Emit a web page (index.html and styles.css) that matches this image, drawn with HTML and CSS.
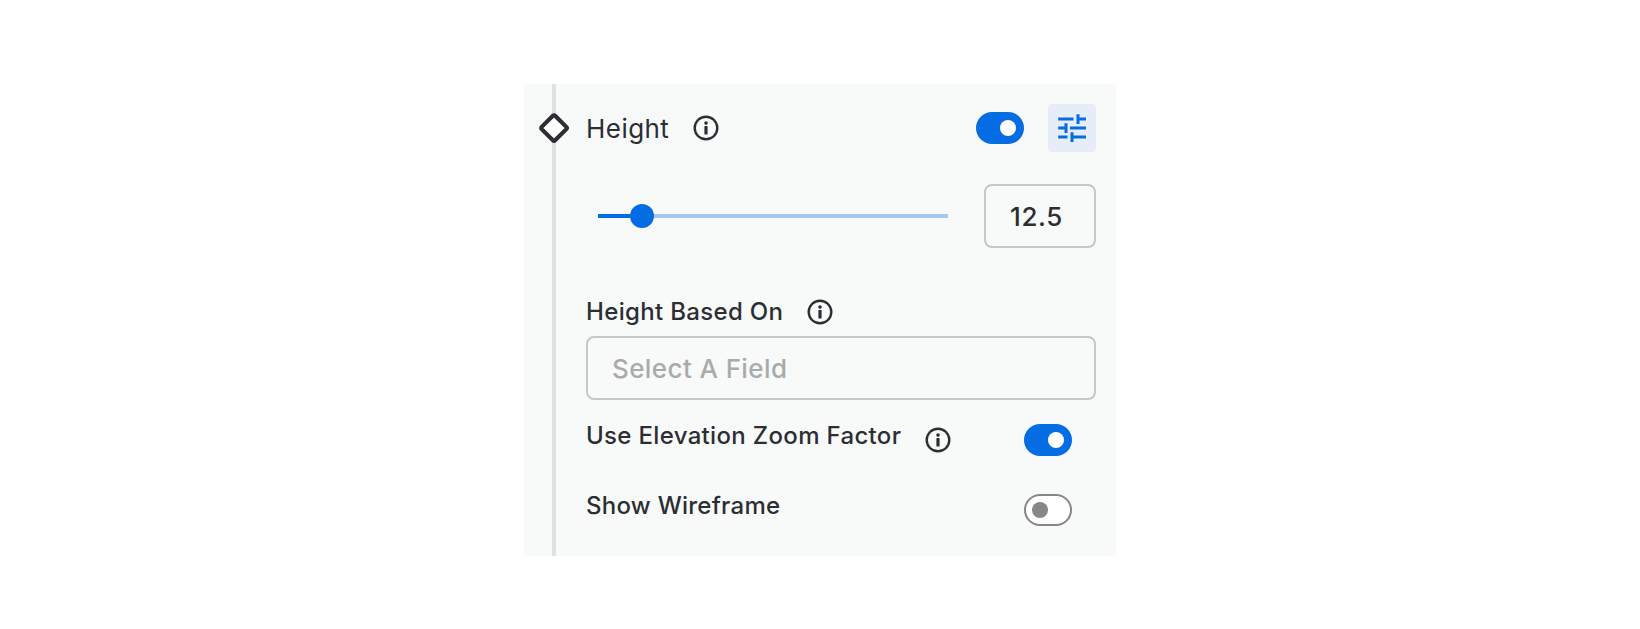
FILE: index.html
```
<!DOCTYPE html>
<html lang="en">
<head>
<meta charset="utf-8">
<title>Height</title>
<link rel="stylesheet" href="styles.css">
</head>
<body>
<svg class="defs" width="0" height="0">
  <symbol id="info" viewBox="0 0 30 30">
    <circle cx="15" cy="15" r="11.3" fill="none" stroke="currentColor" stroke-width="2.4"/>
    <circle cx="15" cy="10.1" r="1.8" fill="currentColor"/>
    <rect x="13.4" y="13.1" width="3.2" height="8.3" rx=".5" fill="currentColor"/>
  </symbol>
</svg>
<main class="panel">
  <div class="rail">
    <svg class="marker" width="32" height="32" viewBox="0 0 32 32"><rect x="6.5" y="6.5" width="19" height="19" rx="1.6" transform="rotate(45 16 16)" fill="#fff" stroke="#2c2e33" stroke-width="4.2"/></svg>
  </div>
  <section class="content">
    <header class="head">
      <span class="title">Height</span>
      <svg class="info"><use href="#info"/></svg>
      <span class="toggle on push"></span>
      <button class="tune" aria-label="Advanced">
        <svg width="48" height="48" viewBox="0 0 48 48" fill="none" stroke="currentColor" stroke-width="3"><path d="M10.2 15.1H25.5M30 10.2V20M30 15.1H38M10.2 24H18M18 19.2V29M22 24H38M10.2 33H19.5M24 28.3V38M24 33H38"/></svg>
      </button>
    </header>
    <div class="slider-row">
      <div class="slider"><span class="fill"></span><span class="thumb"></span><span class="track"></span></div>
      <div class="box number">12.5</div>
    </div>
    <div class="label-row">
      <span class="label based">Height Based On</span>
      <svg class="info"><use href="#info"/></svg>
    </div>
    <div class="box select">Select A Field</div>
    <div class="option first">
      <span class="label zoom">Use Elevation Zoom Factor</span>
      <svg class="info"><use href="#info"/></svg>
      <span class="toggle on push"></span>
    </div>
    <div class="option second">
      <span class="label wire">Show Wireframe</span>
      <span class="toggle push"></span>
    </div>
  </section>
</main>
</body>
</html>
```
FILE: styles.css
```
* { box-sizing: border-box; }
body {
  margin: 0;
  padding-top: 84px;
  background: #fff;
  color: #2c2e33;
  font-family: Inter, "Liberation Sans", sans-serif;
}
.defs { position: absolute; }
.panel {
  display: flex;
  width: 592px;
  height: 472px;
  margin: 0 auto;
  background: #f8faf9;
}
.rail {
  display: flex;
  justify-content: center;
  width: 60px;
  padding-top: 28px;
  background: linear-gradient(#dfe1e0, #dfe1e0) 50% 0 / 4px 100% no-repeat;
}
.content { width: 512px; padding: 20px 0 0 2px; }
.head { display: flex; align-items: center; height: 48px; }
.title {
  width: 105px;
  padding-top: 2px;
  font-size: 26px;
  font-weight: 400;
  line-height: 32px;
  letter-spacing: .45px;
  white-space: nowrap;
}
.info { flex: none; display: block; width: 30px; height: 30px; }
.toggle {
  display: flex;
  flex: none;
  width: 48px;
  height: 32px;
  padding: 6px;
  border: 2px solid #858786;
  border-radius: 16px;
  background: #fff;
}
.toggle::before {
  content: "";
  width: 16px;
  height: 16px;
  border-radius: 50%;
  background: #858786;
}
.toggle.on { justify-content: flex-end; border-color: #056de3; background: #056de3; }
.toggle.on::before { background: #fff; }
.push { margin-left: auto; }
.tune {
  width: 48px;
  height: 48px;
  margin-left: 24px;
  padding: 0;
  border: 0;
  border-radius: 4px;
  background: #e6edf8;
  color: #056de3;
}
.tune svg { display: block; }
.slider-row { display: flex; align-items: center; height: 64px; margin-top: 32px; }
.slider { display: flex; align-items: center; width: 350px; margin-left: 12px; }
.fill { width: 32px; height: 4px; background: #056de3; }
.thumb { width: 24px; height: 24px; border-radius: 50%; background: #056de3; }
.track { flex: 1; height: 4px; background: #a6c6f2; }
.box {
  display: flex;
  align-items: center;
  height: 64px;
  border: 2px solid #c5c7c6;
  border-radius: 8px;
  font-size: 26px;
  font-weight: 500;
  letter-spacing: .4px;
}
.number { width: 112px; margin-left: 36px; padding-left: 24px; letter-spacing: .6px; }
.select { width: 510px; padding-left: 24px; color: #a9abaa; }
.label-row { display: flex; align-items: center; height: 32px; margin: 48px 0 8px; }
.label { font-size: 24px; line-height: 32px; font-weight: 500; letter-spacing: .33px; white-space: nowrap; }
.based { width: 219px; }
.zoom { width: 337px; }
.wire { letter-spacing: .26px; }
.option { display: flex; width: 486px; height: 32px; }
.option .label { margin-top: -4px; }
.option .info { margin-top: 1px; }
.first { margin-top: 24px; }
.second { margin-top: 38px; }
```
